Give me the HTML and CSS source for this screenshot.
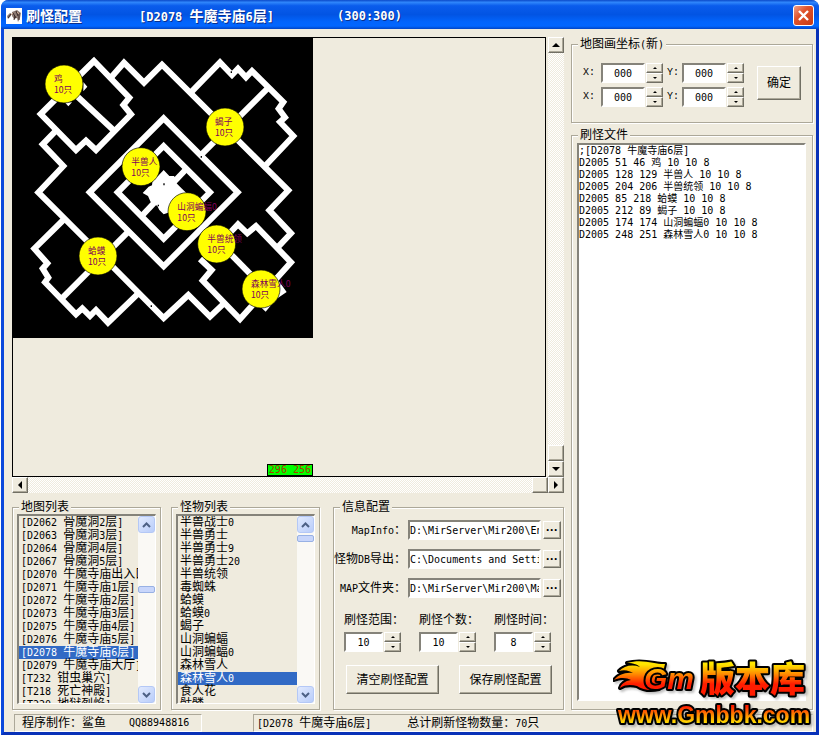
FILE: index.html
```html
<!DOCTYPE html>
<html lang="zh-CN">
<head>
    <meta charset="UTF-8">
    <meta name="viewport" content="width=device-width, initial-scale=1.0">
    <title>刷怪配置</title>
    <link rel="stylesheet" href="styles.css">
</head>
<body>
    <div class="window">
        <header class="titlebar">
            <svg class="app-icon" viewBox="0 0 16 16" aria-hidden="true">
                <rect width="16" height="16" fill="#fff"/>
                <path d="M1 8l3-3 2 1-2 3-2 2zM6 4l5-2 4 3-1 5-2 4-1-4-3 1-2-3z" fill="#8d7b74"/>
                <path d="M2 10l3-4M7 5l3 5M10 3l2 5M9 8l-1 4M13 5v7" stroke="#3a2a28" fill="none"/>
                <path d="M5 7l2-2M11 4l2 2" stroke="#c9a58c" fill="none"/>
            </svg>
            <h1 class="mix">刷怪配置</h1>
            <span class="title-map mix">[D2078 牛魔寺庙6层]</span>
            <span class="title-size">(300:300)</span>
            <button class="close" aria-label="关闭"><svg viewBox="0 0 19 19"><path d="M5 5l9 9M14 5l-9 9" stroke="#fff" stroke-width="2.4"/></svg></button>
        </header>

        <main class="content">
            <div class="left">
                <section class="map-area">
                    <div class="viewport">
                        <svg class="map" viewBox="39 24 900 900">
                            <rect x="36" y="21" width="903" height="903" fill="#000"/>
                            <g fill="none" stroke="#fff" stroke-width="18">
                                <!-- north west room -->
                                <path d="M282 93L122 252L228 360L258 332L288 360L393 253L370 225L388 203Z"/>
                                <path d="M192 162L340 300"/>
                                <!-- outer wall -->
                                <path d="M335 140L372 98L432 158L486 104L865 481L808 541L873 610L835 650"/>
                                <path d="M165 305L128 343L190 408L115 487L294 666L491 864L565 795L630 860L672 820"/>
                                <!-- north east room -->
                                <path d="M575 185L660 97L696 135L714 116L738 142L756 123L850 216L836 236L855 262L840 276L880 318L798 405"/>
                                <path d="M803 175L602 376"/>
                                <!-- south west room -->
                                <path d="M190 570L103 656L142 700L128 716L145 743L135 757L228 853L247 835L270 858L288 840L324 878L415 790"/>
                                <path d="M188 803L385 605"/>
                                <!-- south east room -->
                                <path d="M692 606L714 583L742 610L768 588L873 697L720 867L608 752L635 720L600 687"/>
                                <path d="M690 670L783 765"/>
                                <!-- centre -->
                                <path d="M491 265L713 487L491 709L269 487Z"/>
                                <path d="M491 348L630 487L491 626L353 487Z"/>
                                <path d="M556 420L428 555"/>
                            </g>
                            <path d="M491 420L508 438L522 438L530 450L528 458L546 476L560 490L504 548L491 553L478 540L472 528L452 516L444 498L428 489L446 470L456 466L458 448L474 438Z" fill="#fff"/>
                            <path d="M250 156L262 170L250 184M194 217L205 229L216 217M828 742L860 786L828 808L797 845L770 820" fill="#fff"/>
                            <path d="M492 460v6M475 524v5M604 378v5M454 826v5M694 124v5" stroke="#000" stroke-width="4"/>
                            <g class="spots">
                                <circle cx="192" cy="162" r="57"/>
                                <circle cx="675" cy="291" r="57"/>
                                <circle cx="423" cy="410" r="57"/>
                                <circle cx="561" cy="545" r="57"/>
                                <circle cx="650" cy="642" r="57"/>
                                <circle cx="294" cy="678" r="57"/>
                                <circle cx="783" cy="777" r="57"/>
                            </g>
                            <g class="spot-text">
                                <text x="162" y="156">鸡</text><text x="162" y="189">10只</text>
                                <text x="645" y="285">蝎子</text><text x="645" y="318">10只</text>
                                <text x="394" y="405">半兽人</text><text x="394" y="438">10只</text>
                                <text x="532" y="540">山洞蝙蝠0</text><text x="532" y="573">10只</text>
                                <text x="622" y="637">半兽统领</text><text x="622" y="670">10只</text>
                                <text x="264" y="673">蛤蟆</text><text x="264" y="706">10只</text>
                                <text x="753" y="772">森林雪人0</text><text x="753" y="805">10只</text>
                            </g>
                        </svg>
                        <span class="cursor-pos">296 256</span>
                    </div>
                    <div class="scroll scroll-v">
                        <button class="raised up" aria-label="向上"></button>
                        <div class="raised thumb"></div>
                        <button class="raised down" aria-label="向下"></button>
                    </div>
                    <div class="scroll scroll-h">
                        <button class="raised prev" aria-label="向左"></button>
                        <div class="raised thumb"></div>
                        <button class="raised next" aria-label="向右"></button>
                    </div>
                </section>

                <section class="panels">
                    <fieldset class="list-group">
                        <legend>地图列表</legend>
                        <div class="listbox">
                            <ul id="map-list" class="map-list" role="listbox" aria-label="地图列表"></ul>
                            <div class="xp-scroll">
                                <button aria-label="向上"><svg viewBox="0 0 9 6"><path d="M1 5l3.500-3.500L8 5"/></svg></button>
                                <div class="xp-track middle"><div class="xp-thumb"></div></div>
                                <button aria-label="向下"><svg viewBox="0 0 9 6"><path d="M1 1l3.500 3.500L8 1"/></svg></button>
                            </div>
                        </div>
                    </fieldset>

                    <fieldset class="list-group">
                        <legend>怪物列表</legend>
                        <div class="listbox">
                            <ul id="monster-list" role="listbox" aria-label="怪物列表"></ul>
                            <div class="xp-scroll">
                                <button aria-label="向上"><svg viewBox="0 0 9 6"><path d="M1 5l3.500-3.500L8 5"/></svg></button>
                                <div class="xp-track"><div class="xp-thumb"></div></div>
                                <button aria-label="向下"><svg viewBox="0 0 9 6"><path d="M1 1l3.500 3.500L8 1"/></svg></button>
                            </div>
                        </div>
                    </fieldset>

                    <fieldset class="config">
                        <legend>信息配置</legend>
                        <div class="paths">
                            <label class="mix" for="mapinfo">MapInfo：</label>
                            <input id="mapinfo" type="text" value="D:\MirServer\Mir200\Envir">
                            <button class="raised browse" aria-label="浏览 MapInfo">···</button>
                            <label class="mix" for="monster-db">怪物DB导出：</label>
                            <input id="monster-db" type="text" value="C:\Documents and Settings">
                            <button class="raised browse" aria-label="浏览怪物DB">···</button>
                            <label class="mix" for="map-dir">MAP文件夹：</label>
                            <input id="map-dir" type="text" value="D:\MirServer\Mir200\Map">
                            <button class="raised browse" aria-label="浏览MAP文件夹">···</button>
                        </div>
                        <div class="amounts">
                            <div>
                                <label for="range">刷怪范围：</label>
                                <div class="spin"><input id="range" type="text" value="10"><span class="arrows"><button class="raised up" aria-label="增加"></button><button class="raised down" aria-label="减少"></button></span></div>
                            </div>
                            <div>
                                <label for="count">刷怪个数：</label>
                                <div class="spin"><input id="count" type="text" value="10"><span class="arrows"><button class="raised up" aria-label="增加"></button><button class="raised down" aria-label="减少"></button></span></div>
                            </div>
                            <div>
                                <label for="time">刷怪时间：</label>
                                <div class="spin"><input id="time" type="text" value="8"><span class="arrows"><button class="raised up" aria-label="增加"></button><button class="raised down" aria-label="减少"></button></span></div>
                            </div>
                        </div>
                        <div class="actions">
                            <button class="raised">清空刷怪配置</button>
                            <button class="raised">保存刷怪配置</button>
                        </div>
                    </fieldset>
                </section>
            </div>

            <div class="right">
                <fieldset class="coords">
                    <legend class="mix">地图画坐标(新)</legend>
                    <div class="coord-grid">
                        <label for="x1">X:</label>
                        <div class="spin"><input id="x1" type="text" value="000"><span class="arrows"><button class="raised up" aria-label="增加"></button><button class="raised down" aria-label="减少"></button></span></div>
                        <label for="y1">Y:</label>
                        <div class="spin"><input id="y1" type="text" value="000"><span class="arrows"><button class="raised up" aria-label="增加"></button><button class="raised down" aria-label="减少"></button></span></div>
                        <label for="x2">X:</label>
                        <div class="spin"><input id="x2" type="text" value="000"><span class="arrows"><button class="raised up" aria-label="增加"></button><button class="raised down" aria-label="减少"></button></span></div>
                        <label for="y2">Y:</label>
                        <div class="spin"><input id="y2" type="text" value="000"><span class="arrows"><button class="raised up" aria-label="增加"></button><button class="raised down" aria-label="减少"></button></span></div>
                    </div>
                    <button class="raised confirm">确定</button>
                </fieldset>
                <fieldset class="file-group">
                    <legend>刷怪文件</legend>
                    <textarea aria-label="刷怪文件" spellcheck="false">;[D2078 牛魔寺庙6层]
D2005 51 46 鸡 10 10 8
D2005 128 129 半兽人 10 10 8
D2005 204 206 半兽统领 10 10 8
D2005 85 218 蛤蟆 10 10 8
D2005 212 89 蝎子 10 10 8
D2005 174 174 山洞蝙蝠0 10 10 8
D2005 248 251 森林雪人0 10 10 8</textarea>
                </fieldset>
            </div>
        </main>

        <footer class="statusbar">
            <div class="status author"><span>程序制作：鲨鱼</span><span>QQ88948816</span></div>
            <div class="status summary"><span class="mix">[D2078 牛魔寺庙6层]</span><span class="mix">总计刷新怪物数量：70只</span></div>
        </footer>

        <svg class="brand" viewBox="0 0 204 76">
            <defs>
                <linearGradient id="fire" gradientUnits="userSpaceOnUse" x1="0" y1="5" x2="0" y2="38">
                    <stop offset="0.1" stop-color="#ffe600"/>
                    <stop offset="0.4" stop-color="#ff8a00"/>
                    <stop offset="0.7" stop-color="#ff1c00"/>
                </linearGradient>
                <linearGradient id="ember" gradientUnits="userSpaceOnUse" x1="0" y1="48" x2="0" y2="70">
                    <stop offset="0.1" stop-color="#ff1c00"/>
                    <stop offset="0.5" stop-color="#ff8a00"/>
                    <stop offset="0.9" stop-color="#ffe600"/>
                </linearGradient>
            </defs>
            <g class="brand-line" fill="url(#fire)">
                <path d="M52 8C44 9 30 2 14 7C21 7 25 9 27 11C19 8 11 10 6 15C12 13 17 15 20 17C12 16 5 19 1 24C8 21 14 22 18 24C12 25 8 28 7 32C13 28 19 29 24 30C30 34 38 35 46 33Z"/>
                <text class="gm" x="31" y="33">Gm</text>
                <text class="zh-brand" x="87" y="36">版本库</text>
            </g>
            <g class="brand-line" fill="url(#ember)">
                <text class="site" x="5" y="67">www.Gmbbk.com</text>
            </g>
        </svg>
    </div>

    <script>
        const maps = [
            '[D2062 骨魔洞2层]', '[D2063 骨魔洞3层]', '[D2064 骨魔洞4层]', '[D2067 骨魔洞5层]',
            '[D2070 牛魔寺庙出入口]', '[D2071 牛魔寺庙1层]', '[D2072 牛魔寺庙2层]', '[D2073 牛魔寺庙3层]',
            '[D2075 牛魔寺庙4层]', '[D2076 牛魔寺庙5层]', '[D2078 牛魔寺庙6层]', '[D2079 牛魔寺庙大厅]',
            '[T232 钳虫巢穴]', '[T218 死亡神殿]', '[T220 地狱烈焰]'
        ];
        const monsters = [
            '半兽战士0', '半兽勇士', '半兽勇士9', '半兽勇士20', '半兽统领', '毒蜘蛛', '蛤蟆', '蛤蟆0',
            '蝎子', '山洞蝙蝠', '山洞蝙蝠0', '森林雪人', '森林雪人0', '食人花', '骷髅'
        ];

        // Fill a list box and mark the selected row
        function fillList(id, items, selected) {
            const list = document.getElementById(id);
            items.forEach(text => {
                const row = document.createElement('li');
                row.className = 'mix';
                row.setAttribute('role', 'option');
                row.setAttribute('aria-selected', text === selected);
                row.textContent = text;
                list.appendChild(row);
            });
        }

        fillList('map-list', maps, '[D2078 牛魔寺庙6层]');
        fillList('monster-list', monsters, '森林雪人0');

        // Latin text is set in a smaller size than the Chinese text next to it
        document.querySelectorAll('.mix').forEach(el => {
            el.innerHTML = el.textContent.replace(/[\x20-\x7e]+/g, '<span class="latin">$&</span>');
        });
    </script>
</body>
</html>
```
FILE: styles.css
```css
* {
    box-sizing: border-box;
}
body {
    margin: 0;
    padding: 0 1px 1px;
    background: #fff;
    color: #000;
    font: 12px/14px "Liberation Sans", "Noto Sans CJK SC", sans-serif;
}
button, input, textarea {
    font: inherit;
    color: inherit;
    margin: 0;
    padding: 0;
    border-radius: 0;
    outline: none;
}
.latin, input, textarea, .title-size, .cursor-pos {
    font-family: "DejaVu Sans Mono", "Noto Sans CJK SC", monospace;
    font-size: 10px;
}
.latin {
    line-height: 1;
    white-space: pre;
}

/* window frame */
.window {
    position: relative;
    display: flex;
    flex-direction: column;
    min-height: calc(100vh - 1px);
    border: solid #0a48dc;
    border-width: 0 3px 3px;
    border-right-color: #0831b8;
    border-bottom-color: #0831b8;
    border-radius: 8px 8px 0 0;
    background: #efebde;
}
.titlebar {
    display: flex;
    align-items: center;
    height: 29px;
    margin: 0 -3px;
    padding: 2px 5px 0;
    border-radius: 7px 7px 0 0;
    background: linear-gradient(#0b49c9, #2f86fb 8%, #0a5cec 20%, #0254e3 50%, #0264fc 75%, #0266ff 90%, #0144c4);
    color: #fff;
    font-weight: bold;
    font-size: 14px;
    text-shadow: 1px 1px 0 #0a2f8c;
    white-space: pre;
}
.titlebar h1 {
    width: 113px;
    margin: 0 0 0 4px;
    font-size: 14px;
}
.titlebar .latin, .title-size {
    font-size: 12px;
}
.title-map {
    width: 198px;
}
.app-icon {
    width: 16px;
    height: 16px;
}
.close {
    width: 21px;
    height: 21px;
    margin-left: auto;
    border: 1px solid #fff;
    border-radius: 3px;
    background: linear-gradient(135deg, #f0a088, #e0532c 40%, #c83a14);
}
.close svg {
    display: block;
    width: 19px;
    height: 19px;
}
.content {
    flex: 1;
    display: grid;
    grid-template-columns: minmax(0, 1fr) 242px;
    gap: 7px;
    padding: 8px 3px 4px 8px;
}
.left, .right {
    display: flex;
    flex-direction: column;
}

/* 3d edges */
.raised {
    border: 1px solid;
    border-color: #fff #716f64 #716f64 #fff;
    background: #efebde;
    box-shadow: inset -1px -1px 0 #aca899;
}
input, textarea, .listbox {
    border: 2px solid;
    border-color: #85837a #fff #fff #85837a;
    background: #fff;
}
input {
    height: 20px;
    min-width: 0;
    width: 100%;
}
fieldset {
    min-width: 0;
    margin: 0;
    padding: 0;
    border: 1px solid #aca899;
    box-shadow: 1px 1px 0 #fff, inset 1px 1px 0 #fff;
}
legend {
    margin-left: 6px;
    padding: 0 2px;
    background: #efebde;
}

/* arrows */
.up, .down, .prev, .next {
    display: flex;
    align-items: center;
    justify-content: center;
}
.up::before, .down::before, .prev::before, .next::before {
    content: "";
    border: 4px solid transparent;
}
.up::before {
    border-top: 0;
    border-bottom-color: #000;
}
.down::before {
    border-bottom: 0;
    border-top-color: #000;
}
.prev::before {
    border-left: 0;
    border-right-color: #000;
}
.next::before {
    border-right: 0;
    border-left-color: #000;
}

/* map */
.map-area {
    flex: 1;
    display: grid;
    grid-template-columns: minmax(0, 1fr) 16px;
    grid-template-rows: 1fr 16px;
    column-gap: 2px;
}
.viewport {
    position: relative;
    border: 1px solid #000;
    overflow: hidden;
}
.map {
    display: block;
    width: 300px;
    height: 300px;
}
.spots circle {
    fill: #ff0;
    stroke: #000;
    stroke-width: 2;
}
.spot-text {
    fill: #80005a;
    font-family: "Noto Sans CJK SC", sans-serif;
    font-size: 26px;
}
.cursor-pos {
    position: absolute;
    right: 232px;
    bottom: 0;
    padding: 0 1px;
    border: 1px solid #000;
    background: #0f0;
    color: #a04000;
    line-height: 10px;
}
.scroll {
    display: flex;
    background: repeating-conic-gradient(#fff 0 25%, #efebde 0 50%) 0 0 / 2px 2px;
}
.scroll > * {
    flex: none;
    width: 16px;
    height: 16px;
}
.scroll .thumb {
    margin-left: auto;
}
.scroll-v {
    flex-direction: column;
}
.scroll-v .thumb {
    margin: auto 0 0;
}
.scroll-h {
    grid-column: 1 / 3;
}

/* lower panels */
.panels {
    display: grid;
    grid-template-columns: 149px 149px minmax(0, 1fr);
    gap: 10px;
    height: 210px;
    margin-top: 7px;
}
.list-group {
    padding: 0 4px 5px;
    display: flex;
}
.list-group legend {
    margin-left: 2px;
}
.listbox {
    display: flex;
    width: 100%;
    height: 190px;
    border-width: 2px 1px 1px 2px;
    background: #efebde;
}
.listbox ul {
    flex: 1;
    min-width: 0;
    margin: 0;
    padding: 0;
    overflow: hidden;
    list-style: none;
}
.listbox li {
    height: 13px;
    padding-left: 2px;
    line-height: 13px;
    white-space: nowrap;
}
li[aria-selected="true"] {
    background: #316ac5;
    color: #fff;
}
.xp-scroll {
    display: flex;
    flex-direction: column;
    width: 17px;
    background: #faf9f5;
}
.xp-scroll button {
    display: flex;
    align-items: center;
    justify-content: center;
    height: 17px;
    border: 1px solid #b4c8f6;
    border-radius: 3px;
    background: linear-gradient(135deg, #e1eafe, #b9cdfa);
}
.xp-scroll svg {
    width: 9px;
    height: 6px;
    fill: none;
    stroke: #4d6185;
    stroke-width: 2;
}
.xp-track {
    flex: 1;
    padding-top: 2px;
}
.xp-track.middle {
    padding-top: 53px;
}
.xp-thumb {
    height: 7px;
    border: 1px solid #98b1e4;
    border-radius: 2px;
    background: #c8d6fb;
}

/* settings */
.config {
    margin-left: 3px;
}
.paths {
    display: grid;
    grid-template-columns: 71px minmax(0, 1fr) 18px;
    gap: 9px 2px;
    align-items: center;
    padding: 6px 2px 0 1px;
}
.paths label {
    display: flex;
    align-items: baseline;
    justify-content: flex-end;
    white-space: nowrap;
}
.browse {
    height: 18px;
    font-family: "Liberation Sans", sans-serif;
    font-weight: bold;
    line-height: 14px;
}
.amounts {
    display: grid;
    grid-template-columns: repeat(3, 57px);
    gap: 18px;
    padding: 15px 10px 0;
}
.amounts label {
    display: block;
    margin-bottom: 5px;
    white-space: nowrap;
}
.spin {
    display: flex;
    gap: 1px;
    width: 57px;
}
.spin input {
    text-align: center;
}
.arrows {
    flex: none;
    display: flex;
    flex-direction: column;
    width: 17px;
}
.arrows button {
    height: 10px;
}
.arrows .up::before, .arrows .down::before {
    border-left-width: 2px;
    border-right-width: 2px;
}
.arrows .up::before {
    border-bottom-width: 2px;
}
.arrows .down::before {
    border-top-width: 2px;
}
.actions {
    display: flex;
    gap: 20px;
    padding: 13px 12px 0;
}
.actions button {
    flex: none;
    width: 93px;
    height: 29px;
}

/* right column */
.right {
    gap: 5px;
}
.coords {
    height: 86px;
}
.coord-grid {
    float: left;
    display: grid;
    grid-template-columns: 14px 62px 11px 62px;
    gap: 4px;
    align-items: center;
    padding: 12px 0 0 11px;
}
.coord-grid label {
    font-family: "Liberation Mono", monospace;
    font-size: 10px;
    white-space: nowrap;
}
.coord-grid .spin {
    width: 62px;
}
.confirm {
    width: 44px;
    height: 34px;
    margin: 15px 0 0 13px;
}
.file-group {
    flex: 1;
    display: flex;
    padding: 1px 6px 7px 5px;
}
.file-group legend {
    margin-left: 1px;
}
textarea {
    width: 100%;
    height: 558px;
    line-height: 12px;
    resize: none;
    overflow: hidden;
    white-space: pre;
}

/* status bar */
.statusbar {
    display: flex;
    justify-content: space-between;
    padding: 0 3px 0 10px;
}
.status {
    display: flex;
    height: 18px;
    border: 1px solid;
    border-color: #aca899 #fff #fff #aca899;
    line-height: 16px;
    white-space: nowrap;
}
.author {
    width: 188px;
    padding-left: 7px;
    gap: 23px;
}
.author span:last-child {
    font-family: "DejaVu Sans Mono", monospace;
    font-size: 10px;
}
.summary {
    width: 560px;
    padding-left: 3px;
    gap: 36px;
}

/* site logo */
.brand {
    position: absolute;
    right: -1px;
    bottom: 0;
    width: 204px;
    height: 76px;
    filter: drop-shadow(2px 2px 1px #8888);
}
.brand-line {
    stroke: #000;
    stroke-width: 4;
    stroke-linejoin: round;
    paint-order: stroke;
}
.gm {
    font: italic bold 30px "Liberation Sans", sans-serif;
}
.zh-brand {
    font: 900 35px "Noto Sans CJK SC", sans-serif;
}
.site {
    font: bold 23px "Liberation Sans", sans-serif;
}
```
